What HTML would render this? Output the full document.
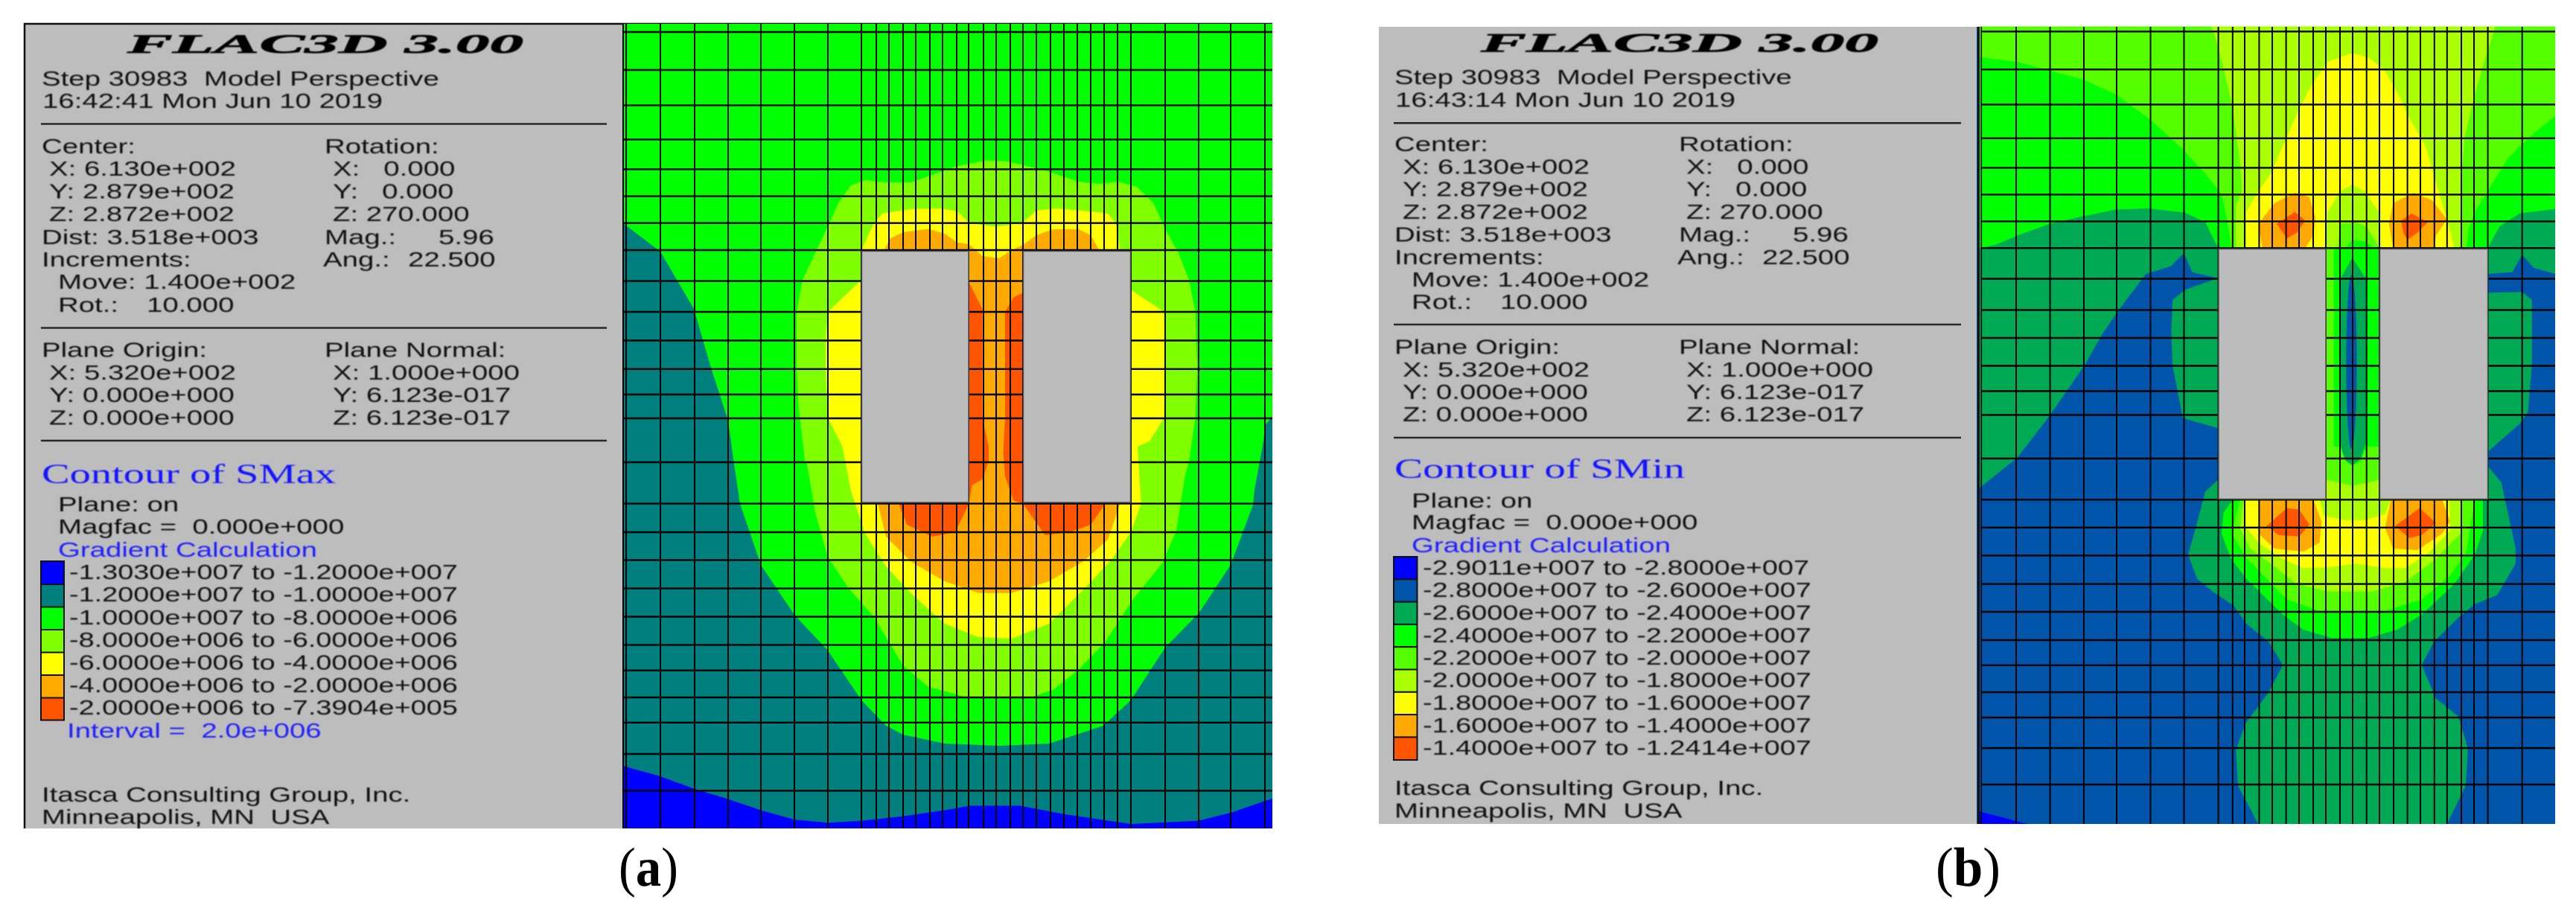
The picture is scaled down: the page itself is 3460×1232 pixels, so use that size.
<!DOCTYPE html>
<html><head><meta charset="utf-8"><style>
html,body{margin:0;padding:0;background:#fff;width:3460px;height:1232px;overflow:hidden}
svg{display:block;position:absolute;left:0;top:0}
.t{font-family:"Liberation Sans",Arial,sans-serif;font-size:28px;fill:#111;white-space:pre;transform-box:fill-box;transform-origin:0 0;transform:scaleX(1.372)}
.l{transform:scaleX(1.352)}
.bl{fill:#2020ff}
.h{font-family:"Liberation Serif",serif;font-weight:bold;font-style:italic;font-size:36px;fill:#000;stroke:#000;stroke-width:.7px}
.c{font-family:"Liberation Serif",serif;font-size:37px;fill:#1515ff}
.cap{font-family:"Liberation Serif",serif;font-size:74px;fill:#000}
.txt{filter:blur(.7px)}
</style></head><body>
<svg width="3460" height="1232" viewBox="0 0 3460 1232" xmlns="http://www.w3.org/2000/svg">
<rect width="3460" height="1232" fill="#fff"/>

<!-- PANEL A -->
<rect x="33" y="32" width="804" height="1081" fill="#bdbdbd"/>
<path d="M33 1113V32H1709" fill="none" stroke="#111" stroke-width="2.5"/>

<!-- PLOT A -->
<rect x="837" y="32" width="872" height="1081" fill="#007f7f"/>
<polygon fill="#0000ff" points="837,1029 887,1043 932,1059.5 978,1073.6 1022,1088.5 1067,1101 1112,1105.4 1157,1102.6 1213,1096.6 1269,1088.5 1303,1082.5 1370,1082.5 1429,1093.8 1519,1107 1610,1102.6 1640,1095 1653,1092 1699,1076 1709,1073 1709,1113 837,1113"/>
<polygon fill="#00ff00" points="837,32 1709,32 1709,560 1700,570 1697,592 1692,620 1685,658 1683,678 1653,759 1610,824 1565,870 1519,940.6 1482,975 1409,999 1342,1002 1269,999 1213,987 1190,975 1157,940.6 1112,874 1067,826 1022,759 994,676.6 985.5,620 978,565 955,494 932,415 887,338 837,300"/>
<polygon fill="#80ff00" points="1070,419 1078,376 1100.6,328 1114.6,298.5 1126,273 1143,249 1162,242 1190,245 1224,245 1258,233 1286,223 1325,215.5 1353,216.7 1404,229 1448.5,244 1476.6,247 1502,244 1527,251 1549.5,273 1563.5,304.5 1583,340 1597,376 1605.6,419 1608,494 1605.6,561.5 1597,620 1591.6,640 1580,713 1561,757 1521.5,805.6 1485,862 1448.5,900 1415,926.5 1381,938 1302.6,938 1246.5,922.5 1213,894 1173.5,828.5 1140,790.6 1112,749 1095,688.7 1084,624 1081,620 1078,593 1072.5,545.7 1070,494"/>
<polygon fill="#ffff00" points="1157,336 1173.5,300.5 1185,286.7 1224,280.7 1263,280 1286,284 1302.6,299.7 1336,304.5 1373,299.7 1392,282.7 1420,280 1465,284 1488,286.7 1499,300.5 1504.6,336 1519,336 1519,389.5 1563.5,419 1566,494 1563.5,561.5 1544,593 1528,600 1532.7,676.6 1519,715 1493,752 1454,793.5 1409,838 1359,858 1314,856 1269,838 1224,797.5 1190,761 1162,717 1143,660 1131.5,600 1112,561.5 1109,496 1109,455 1112,419 1157,376"/>
<polygon fill="#ffaa00" points="1187.6,336 1196,320 1213,312 1246.5,307.6 1269,314 1286,326 1301.5,328 1319.4,344 1342,347 1359,336 1375.5,328 1392,316 1415,308 1448.5,308 1465,316 1476.6,336 1504.6,676.6 1488,725 1454,755 1409,781 1359,796.7 1314,796.7 1269,781 1224,755 1190,721 1179,676.6"/>
<polygon fill="#ff5500" points="1301.5,379.6 1319.4,415 1319.4,561.5 1328,600 1328,620 1319.4,644 1305.4,652 1301.5,676.6 1283,715 1252,721 1218.4,705 1207,676.6"/>
<polygon fill="#ff5500" points="1374,393.4 1361.5,399.4 1350,419 1350,561.5 1347.5,608 1350,640 1361.5,672.5 1374,676.6 1403.6,719 1437,715 1465,705 1485,676.6"/>
<path fill="none" stroke="#000" stroke-width="2" d="M837 32V1113M841 32V1113M887 32V1113M933 32V1113M978 32V1113M1022 32V1113M1067 32V1113M1112 32V1113M1157 32V1113M1177 32V1113M1194 32V1113M1213 32V1113M1230 32V1113M1249 32V1113M1266 32V1113M1285 32V1113M1301 32V1113M1321 32V1113M1338 32V1113M1357 32V1113M1374 32V1113M1392 32V1113M1411 32V1113M1429 32V1113M1447 32V1113M1465 32V1113M1483 32V1113M1501 32V1113M1519 32V1113M1565 32V1113M1610 32V1113M1653 32V1113M1699 32V1113"/>
<path fill="none" stroke="#000" stroke-width="2.4" d="M837 43H1709M837 94H1709M837 141.6H1709M837 187.4H1709M837 227.4H1709M837 263.7H1709M837 299.7H1709M837 336H1709M837 377.6H1709M837 419H1709M837 457.5H1709M837 495.8H1709M837 530H1709M837 562H1709M837 621H1709M837 676.6H1709M837 715H1709M837 752.4H1709M837 790.6H1709M837 828.5H1709M837 866.4H1709M837 900.7H1709M837 937H1709M837 970.8H1709M837 1013H1709M837 1062.3H1709"/>
<rect x="1157.5" y="337.5" width="143.5" height="337.5" fill="#bcbcbc" stroke="#555" stroke-width="1.5"/>
<rect x="1374.5" y="337.5" width="144" height="337.5" fill="#bcbcbc" stroke="#555" stroke-width="1.5"/>

<!-- PANEL A TEXT -->
<g class="txt">
<text class="h" x="171" y="71" textLength="532" lengthAdjust="spacingAndGlyphs">FLAC3D 3.00</text>
<text class="t" x="56" y="115">Step 30983  Model Perspective</text>
<text class="t" x="57" y="145">16:42:41 Mon Jun 10 2019</text>
<text class="t" x="56" y="206">Center:</text>
<text class="t" x="66" y="236">X: 6.130e+002</text>
<text class="t" x="66" y="266.5">Y: 2.879e+002</text>
<text class="t" x="66" y="297">Z: 2.872e+002</text>
<text class="t" x="56" y="328">Dist: 3.518e+003</text>
<text class="t" x="56" y="358">Increments:</text>
<text class="t" x="78" y="388">Move: 1.400e+002</text>
<text class="t" x="78" y="419">Rot.:</text>
<text class="t" x="197" y="419">10.000</text>
<text class="t" x="436" y="206">Rotation:</text>
<text class="t" x="447" y="236">X:   0.000</text>
<text class="t" x="447" y="266.5">Y:   0.000</text>
<text class="t" x="447" y="297">Z: 270.000</text>
<text class="t" x="436" y="328">Mag.:</text>
<text class="t" x="589" y="328">5.96</text>
<text class="t" x="434" y="358">Ang.:</text>
<text class="t" x="548" y="358">22.500</text>
<text class="t" x="56" y="479.6">Plane Origin:</text>
<text class="t" x="66" y="510">X: 5.320e+002</text>
<text class="t" x="66" y="540">Y: 0.000e+000</text>
<text class="t" x="66" y="570.6">Z: 0.000e+000</text>
<text class="t" x="436" y="479.6">Plane Normal:</text>
<text class="t" x="447" y="510">X: 1.000e+000</text>
<text class="t" x="447" y="540">Y: 6.123e-017</text>
<text class="t" x="447" y="570.6">Z: 6.123e-017</text>
<text class="c" x="56" y="649" textLength="395" lengthAdjust="spacingAndGlyphs">Contour of SMax</text>
<text class="t" x="78" y="687">Plane: on</text>
<text class="t" x="78" y="717">Magfac =  0.000e+000</text>
<text class="t bl" x="78" y="748">Gradient Calculation</text>
<text class="t l" x="93" y="778">-1.3030e+007 to -1.2000e+007</text>
<text class="t l" x="93" y="808">-1.2000e+007 to -1.0000e+007</text>
<text class="t l" x="93" y="839">-1.0000e+007 to -8.0000e+006</text>
<text class="t l" x="93" y="869">-8.0000e+006 to -6.0000e+006</text>
<text class="t l" x="93" y="899.5">-6.0000e+006 to -4.0000e+006</text>
<text class="t l" x="93" y="930">-4.0000e+006 to -2.0000e+006</text>
<text class="t l" x="93" y="960">-2.0000e+006 to -7.3904e+005</text>
<text class="t bl" x="90" y="991">Interval =  2.0e+006</text>
<text class="t" x="56" y="1077">Itasca Consulting Group, Inc.</text>
<text class="t" x="56" y="1107">Minneapolis, MN  USA</text>
</g>
<path fill="none" stroke="#2a2a2a" stroke-width="2.6" d="M55 166.5H815M55 440.5H815M55 592H815"/>
<g stroke="#111" stroke-width="2">
<rect x="55" y="754" width="31" height="31" fill="#0000ff"/>
<rect x="55" y="785" width="31" height="30.5" fill="#007f7f"/>
<rect x="55" y="815.5" width="31" height="30.5" fill="#00ff00"/>
<rect x="55" y="846" width="31" height="30.5" fill="#80ff00"/>
<rect x="55" y="876.5" width="31" height="30.5" fill="#ffff00"/>
<rect x="55" y="907" width="31" height="30.5" fill="#ffaa00"/>
<rect x="55" y="937.5" width="31" height="30" fill="#ff5500"/>
</g>

<!-- PANEL B -->
<rect x="1852" y="36" width="803" height="1071" fill="#bdbdbd"/>

<!-- PLOT B -->
<rect x="2655" y="36" width="777" height="1071" fill="#0055aa"/>
<g transform="translate(2600 0) scale(.5485 .3954)">
<rect x="105" y="90" width="1412" height="753" fill="#00ff00"/>
<polygon fill="#00aa55" points="105,845 150,830 200,800 280,760 360,735 440,712 520,708 610,722 660,755 692,843 692,945 628,925 608,860 575,905 515,930 450,1050 410,1130 365,1240 280,1410 200,1555 105,1660"/>
<polygon fill="#00aa55" points="692,945 610,985 580,1020 577,1130 580,1240 605,1420 692,1455"/>
<polygon fill="#00aa55" points="1352,843 1380,770 1430,725 1517,710 1517,930 1465,910 1436,865 1412,925 1352,930"/>
<polygon fill="#00aa55" points="1352,995 1436,992 1460,1020 1460,1240 1450,1400 1430,1440 1352,1535"/>
<polygon fill="#55ff00" points="105,90 1517,90 1517,395 1450,470 1400,540 1352,650 1320,720 1305,780 1300,843 725,843 715,760 700,660 660,590 600,500 520,400 440,320 360,270 280,240 200,210 105,195"/>
<polygon fill="#aaff00" points="675,90 1370,90 1350,180 1320,320 1295,470 1287,600 1287,700 1285,843 735,843 735,700 750,650 745,550 725,350 690,150"/>
<polygon fill="#ffff00" points="1020,180 1060,195 1100,240 1140,340 1160,400 1200,500 1225,620 1255,760 1270,843 760,843 760,720 790,650 820,590 855,480 890,370 920,290 960,210"/>
<polygon fill="#aaff00" points="955,843 960,720 990,650 1020,628 1050,650 1085,720 1087,843"/>
<polygon fill="#55ff00" points="985,843 990,760 1030,755 1055,770 1087,843"/>
<polygon fill="#00ff00" points="1005,843 1020,815 1050,820 1075,843"/>
<polygon fill="#ffaa00" points="790,760 830,690 880,655 915,670 930,740 925,800 905,843 800,843"/>
<polygon fill="#ffaa00" points="1110,760 1120,690 1170,655 1215,680 1252,745 1225,800 1220,843 1120,843"/>
<polygon fill="#ff5500" points="835,760 880,720 905,750 885,790 860,810"/>
<polygon fill="#ff5500" points="1140,750 1165,725 1205,755 1180,790 1155,815 1145,790"/>
</g>
<g transform="translate(2600 600) scale(.5485 .40306)">
<polygon fill="#0000ff" points="105,1215 225,1258 105,1258"/>
<polygon fill="#00aa55" points="692,110 660,150 635,280 618,360 640,440 680,485 730,530 760,590 815,650 850,728 815,820 760,920 735,1010 740,1130 790,1258 1252,1258 1298,1130 1303,1005 1280,900 1225,840 1190,728 1220,650 1280,570 1320,525 1375,495 1420,390 1420,340 1385,120 1355,70"/>
</g>
<g transform="translate(2600 0) scale(.5485 .3954)">
<rect x="955" y="843" width="132" height="853" fill="#00ff00"/>
<rect x="955" y="843" width="20" height="853" fill="#55ff00"/>
<polygon fill="#00aa55" points="990,950 1020,875 1055,950 1055,1500 1040,1560 1020,1580 1000,1560 990,1500"/>
<ellipse cx="1018" cy="1230" rx="13" ry="295" fill="#0055aa"/>
</g>
<g transform="translate(2600 600) scale(.5485 .40306)">
<polygon fill="#55ff00" points="955,0 990,0 1005,50 1020,65 1040,50 1055,0 1087,0 1087,176 955,176"/>
<polygon fill="#aaff00" points="955,176 955,110 985,120 1020,130 1060,120 1087,110 1087,176"/>
<polygon fill="#00ff00" points="728,176 705,220 700,290 722,370 760,440 850,560 900,610 970,638 1060,638 1130,610 1190,560 1270,458 1320,360 1340,280 1340,176"/>
<polygon fill="#55ff00" points="745,176 725,290 760,370 810,440 860,510 940,548 1100,548 1190,510 1260,430 1300,350 1320,176"/>
<polygon fill="#aaff00" points="755,176 745,270 770,340 830,400 880,455 960,483 1070,483 1150,450 1220,380 1285,290 1290,176"/>
<polygon fill="#ffff00" points="757,176 755,260 790,320 850,375 900,405 960,403 1030,390 1100,405 1150,405 1210,350 1260,280 1258,176"/>
<polygon fill="#aaff00" points="940,176 950,230 1000,245 1050,245 1100,225 1115,176"/>
<polygon fill="#ffaa00" points="790,176 790,290 830,340 900,350 940,320 945,250 925,176"/>
<polygon fill="#ffaa00" points="1115,176 1100,270 1120,340 1180,345 1240,290 1260,250 1240,176"/>
<polygon fill="#ff5500" points="860,205 890,210 915,260 890,300 840,295 810,265"/>
<polygon fill="#ff5500" points="1185,205 1225,255 1190,295 1160,305 1125,265"/>
</g>
<path fill="none" stroke="#000" stroke-width="2" d="M2708 36V1107M2753.6 36V1107M2799 36V1107M2843 36V1107M2888.5 36V1107M2933.5 36V1107M2979.6 36V1107M2998.8 36V1107M3015 36V1107M3034.4 36V1107M3052 36V1107M3070.6 36V1107M3088 36V1107M3107 36V1107M3124 36V1107M3143 36V1107M3160 36V1107M3178.7 36V1107M3196 36V1107M3215 36V1107M3233.6 36V1107M3251 36V1107M3269.8 36V1107M3286.8 36V1107M3306 36V1107M3323 36V1107M3341.6 36V1107M3387.7 36V1107"/>
<rect x="2656" y="36" width="3" height="1071" fill="#111"/>
<rect x="2660.5" y="36" width="1.6" height="1071" fill="#000"/>
<path fill="none" stroke="#000" stroke-width="2.4" d="M2661 42.3H3432M2661 93.3H3432M2661 140.4H3432M2661 185.8H3432M2661 225.4H3432M2661 261.4H3432M2661 297.4H3432M2661 333.3H3432M2661 374.5H3432M2661 416.4H3432M2661 454H3432M2661 491.5H3432M2661 525.5H3432M2661 557.5H3432M2661 616H3432M2661 671.3H3432M2661 708.8H3432M2661 746.3H3432M2661 784.6H3432M2661 822H3432M2661 860H3432M2661 893.8H3432M2661 930H3432M2661 964H3432M2661 1005H3432M2661 1054H3432"/>
<rect x="2980" y="334.5" width="144" height="336" fill="#bcbcbc" stroke="#555" stroke-width="1.5"/>
<rect x="3196.5" y="334.5" width="145" height="336" fill="#bcbcbc" stroke="#555" stroke-width="1.5"/>

<!-- PANEL B TEXT -->
<g class="txt">
<text class="h" x="1989" y="69.5" textLength="534" lengthAdjust="spacingAndGlyphs">FLAC3D 3.00</text>
<text class="t" x="1873" y="113">Step 30983  Model Perspective</text>
<text class="t" x="1874" y="143.7">16:43:14 Mon Jun 10 2019</text>
<text class="t" x="1873" y="203">Center:</text>
<text class="t" x="1884" y="233.5">X: 6.130e+002</text>
<text class="t" x="1884" y="263.7">Y: 2.879e+002</text>
<text class="t" x="1884" y="294">Z: 2.872e+002</text>
<text class="t" x="1873" y="324.5">Dist: 3.518e+003</text>
<text class="t" x="1873" y="355">Increments:</text>
<text class="t" x="1896" y="385">Move: 1.400e+002</text>
<text class="t" x="1896" y="415">Rot.:</text>
<text class="t" x="2015" y="415">10.000</text>
<text class="t" x="2255" y="203">Rotation:</text>
<text class="t" x="2265" y="233.5">X:   0.000</text>
<text class="t" x="2265" y="263.7">Y:   0.000</text>
<text class="t" x="2265" y="294">Z: 270.000</text>
<text class="t" x="2255" y="324.5">Mag.:</text>
<text class="t" x="2408" y="324.5">5.96</text>
<text class="t" x="2253" y="355">Ang.:</text>
<text class="t" x="2367" y="355">22.500</text>
<text class="t" x="1873" y="475.5">Plane Origin:</text>
<text class="t" x="1884" y="506">X: 5.320e+002</text>
<text class="t" x="1884" y="536">Y: 0.000e+000</text>
<text class="t" x="1884" y="566">Z: 0.000e+000</text>
<text class="t" x="2255" y="475.5">Plane Normal:</text>
<text class="t" x="2265" y="506">X: 1.000e+000</text>
<text class="t" x="2265" y="536">Y: 6.123e-017</text>
<text class="t" x="2265" y="566">Z: 6.123e-017</text>
<text class="c" x="1873" y="642" textLength="390" lengthAdjust="spacingAndGlyphs">Contour of SMin</text>
<text class="t" x="1896" y="682">Plane: on</text>
<text class="t" x="1896" y="711">Magfac =  0.000e+000</text>
<text class="t bl" x="1896" y="742">Gradient Calculation</text>
<text class="t l" x="1911" y="772">-2.9011e+007 to -2.8000e+007</text>
<text class="t l" x="1911" y="802">-2.8000e+007 to -2.6000e+007</text>
<text class="t l" x="1911" y="832.5">-2.6000e+007 to -2.4000e+007</text>
<text class="t l" x="1911" y="863">-2.4000e+007 to -2.2000e+007</text>
<text class="t l" x="1911" y="893">-2.2000e+007 to -2.0000e+007</text>
<text class="t l" x="1911" y="923">-2.0000e+007 to -1.8000e+007</text>
<text class="t l" x="1911" y="953.5">-1.8000e+007 to -1.6000e+007</text>
<text class="t l" x="1911" y="984">-1.6000e+007 to -1.4000e+007</text>
<text class="t l" x="1911" y="1014">-1.4000e+007 to -1.2414e+007</text>
<text class="t" x="1873" y="1068">Itasca Consulting Group, Inc.</text>
<text class="t" x="1873" y="1098.6">Minneapolis, MN  USA</text>
</g>
<path fill="none" stroke="#2a2a2a" stroke-width="2.6" d="M1872 165.3H2634M1872 436H2634M1872 588H2634"/>
<g stroke="#111" stroke-width="2">
<rect x="1872" y="748" width="31.5" height="30.3" fill="#0000ff"/>
<rect x="1872" y="778.3" width="31.5" height="30.3" fill="#0055aa"/>
<rect x="1872" y="808.6" width="31.5" height="30.3" fill="#00aa55"/>
<rect x="1872" y="838.9" width="31.5" height="30.3" fill="#00ff00"/>
<rect x="1872" y="869.2" width="31.5" height="30.3" fill="#55ff00"/>
<rect x="1872" y="899.5" width="31.5" height="30.3" fill="#aaff00"/>
<rect x="1872" y="929.8" width="31.5" height="30.3" fill="#ffff00"/>
<rect x="1872" y="960.1" width="31.5" height="30.3" fill="#ffaa00"/>
<rect x="1872" y="990.4" width="31.5" height="30.6" fill="#ff5500"/>
</g>

<!-- CAPTIONS -->
<text class="cap" x="831" y="1190" textLength="80" lengthAdjust="spacingAndGlyphs">(<tspan font-weight="bold">a</tspan>)</text>
<text class="cap" x="2600" y="1190" textLength="87" lengthAdjust="spacingAndGlyphs">(<tspan font-weight="bold">b</tspan>)</text>
</svg>
</body></html>
